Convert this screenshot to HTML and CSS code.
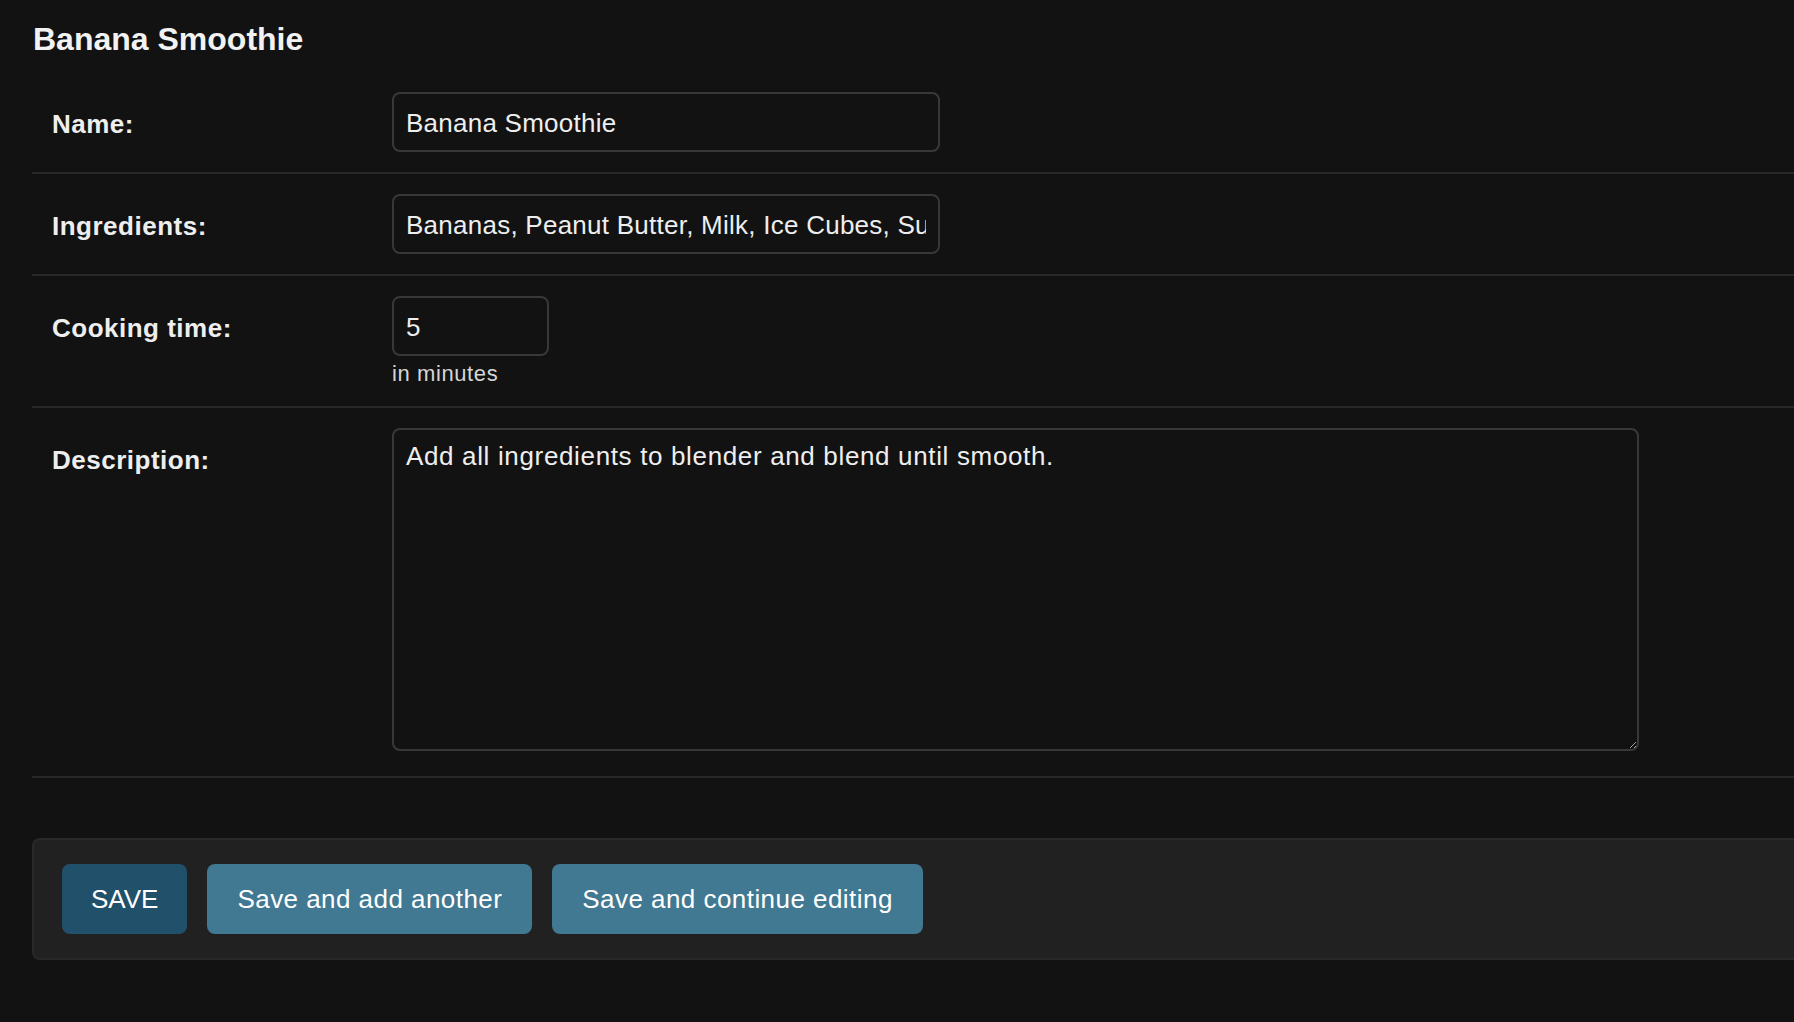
FILE: index.html
```html
<!DOCTYPE html>
<html lang="en">
<head>
<meta charset="utf-8">
<title>Change recipe | Banana Smoothie</title>
<link rel="stylesheet" href="styles.css">
</head>
<body>
<div class="content">
  <h2 class="title">Banana Smoothie</h2>
  <form class="change-form">
    <fieldset class="module">
      <div class="form-row">
        <label class="label" for="id_name">Name:</label>
        <div class="field">
          <input class="text-input name-input" id="id_name" type="text" value="Banana Smoothie">
        </div>
      </div>
      <div class="form-row">
        <label class="label" for="id_ingredients">Ingredients:</label>
        <div class="field">
          <input class="text-input name-input" id="id_ingredients" type="text" value="Bananas, Peanut Butter, Milk, Ice Cubes, Sugar">
        </div>
      </div>
      <div class="form-row">
        <label class="label" for="id_cooking_time">Cooking time:</label>
        <div class="field">
          <input class="text-input number-input" id="id_cooking_time" type="text" value="5">
          <div class="help">in minutes</div>
        </div>
      </div>
      <div class="form-row">
        <label class="label" for="id_description">Description:</label>
        <div class="field">
          <textarea class="text-area" id="id_description">Add all ingredients to blender and blend until smooth.</textarea>
        </div>
      </div>
    </fieldset>
    <div class="submit-row">
      <button type="button" class="btn btn-default">SAVE</button>
      <button type="button" class="btn">Save and add another</button>
      <button type="button" class="btn">Save and continue editing</button>
    </div>
  </form>
</div>
</body>
</html>
```
FILE: styles.css
```css
:root {
  color-scheme: dark;
}

html, body {
  overflow: hidden;
}

body {
  margin: 0;
  background: #121212;
  color: #eeeeee;
  font-family: "Liberation Sans", Arial, sans-serif;
}

.content {
  padding-left: 32px;
  margin-right: -60px;
}

.title {
  margin: 0;
  padding: 20px 0 14px 1px;
  font-size: 32px;
  line-height: 38px;
  font-weight: 700;
  color: #f2f2f2;
}

.change-form {
  margin: 0;
}

.module {
  margin: 0 0 60px;
  padding: 0;
  border: none;
  min-width: 0;
}

.form-row {
  display: flex;
  align-items: flex-start;
  padding: 20px;
  border-bottom: 2px solid #272727;
}

.label {
  flex: 0 0 340px;
  padding-top: 14px;
  font-size: 26px;
  line-height: 36px;
  font-weight: 700;
  letter-spacing: 0.5px;
  color: #eeeeee;
}

.field {
  display: flex;
  flex-direction: column;
  align-items: flex-start;
}

.text-input {
  box-sizing: border-box;
  display: block;
  height: 60px;
  margin: 0;
  padding: 2px 12px 0;
  border: 2px solid #383838;
  border-radius: 8px;
  background: #121212;
  color: #eeeeee;
  font-family: "Liberation Sans", Arial, sans-serif;
  font-size: 26px;
  letter-spacing: 0.25px;
  outline: none;
}

.name-input {
  width: 548px;
}

.number-input {
  width: 157px;
}

.help {
  margin-top: 4px;
  padding-top: 1px;
  font-size: 22px;
  line-height: 25px;
  letter-spacing: 0.6px;
  color: #d6d6d6;
}

.text-area {
  box-sizing: border-box;
  display: block;
  width: 1247px;
  height: 323px;
  margin: 0 0 5px;
  padding: 11px 12px 10px;
  border: 2px solid #383838;
  border-radius: 8px;
  background: #121212;
  color: #eeeeee;
  font-family: "Liberation Sans", Arial, sans-serif;
  font-size: 26px;
  line-height: 1.2;
  letter-spacing: 0.65px;
  outline: none;
}

.submit-row {
  display: flex;
  gap: 20px;
  padding: 24px 28px;
  border: 2px solid #292929;
  border-right: none;
  border-radius: 8px 0 0 8px;
  background: #212121;
}

.btn {
  height: 70px;
  padding: 0 30px;
  border: none;
  border-radius: 8px;
  background: #417892;
  color: #ffffff;
  font-family: "Liberation Sans", Arial, sans-serif;
  font-size: 26px;
  letter-spacing: 0.45px;
  cursor: pointer;
}

.btn-default {
  background: #21506a;
  padding: 0 29px;
  letter-spacing: 0;
}
```
